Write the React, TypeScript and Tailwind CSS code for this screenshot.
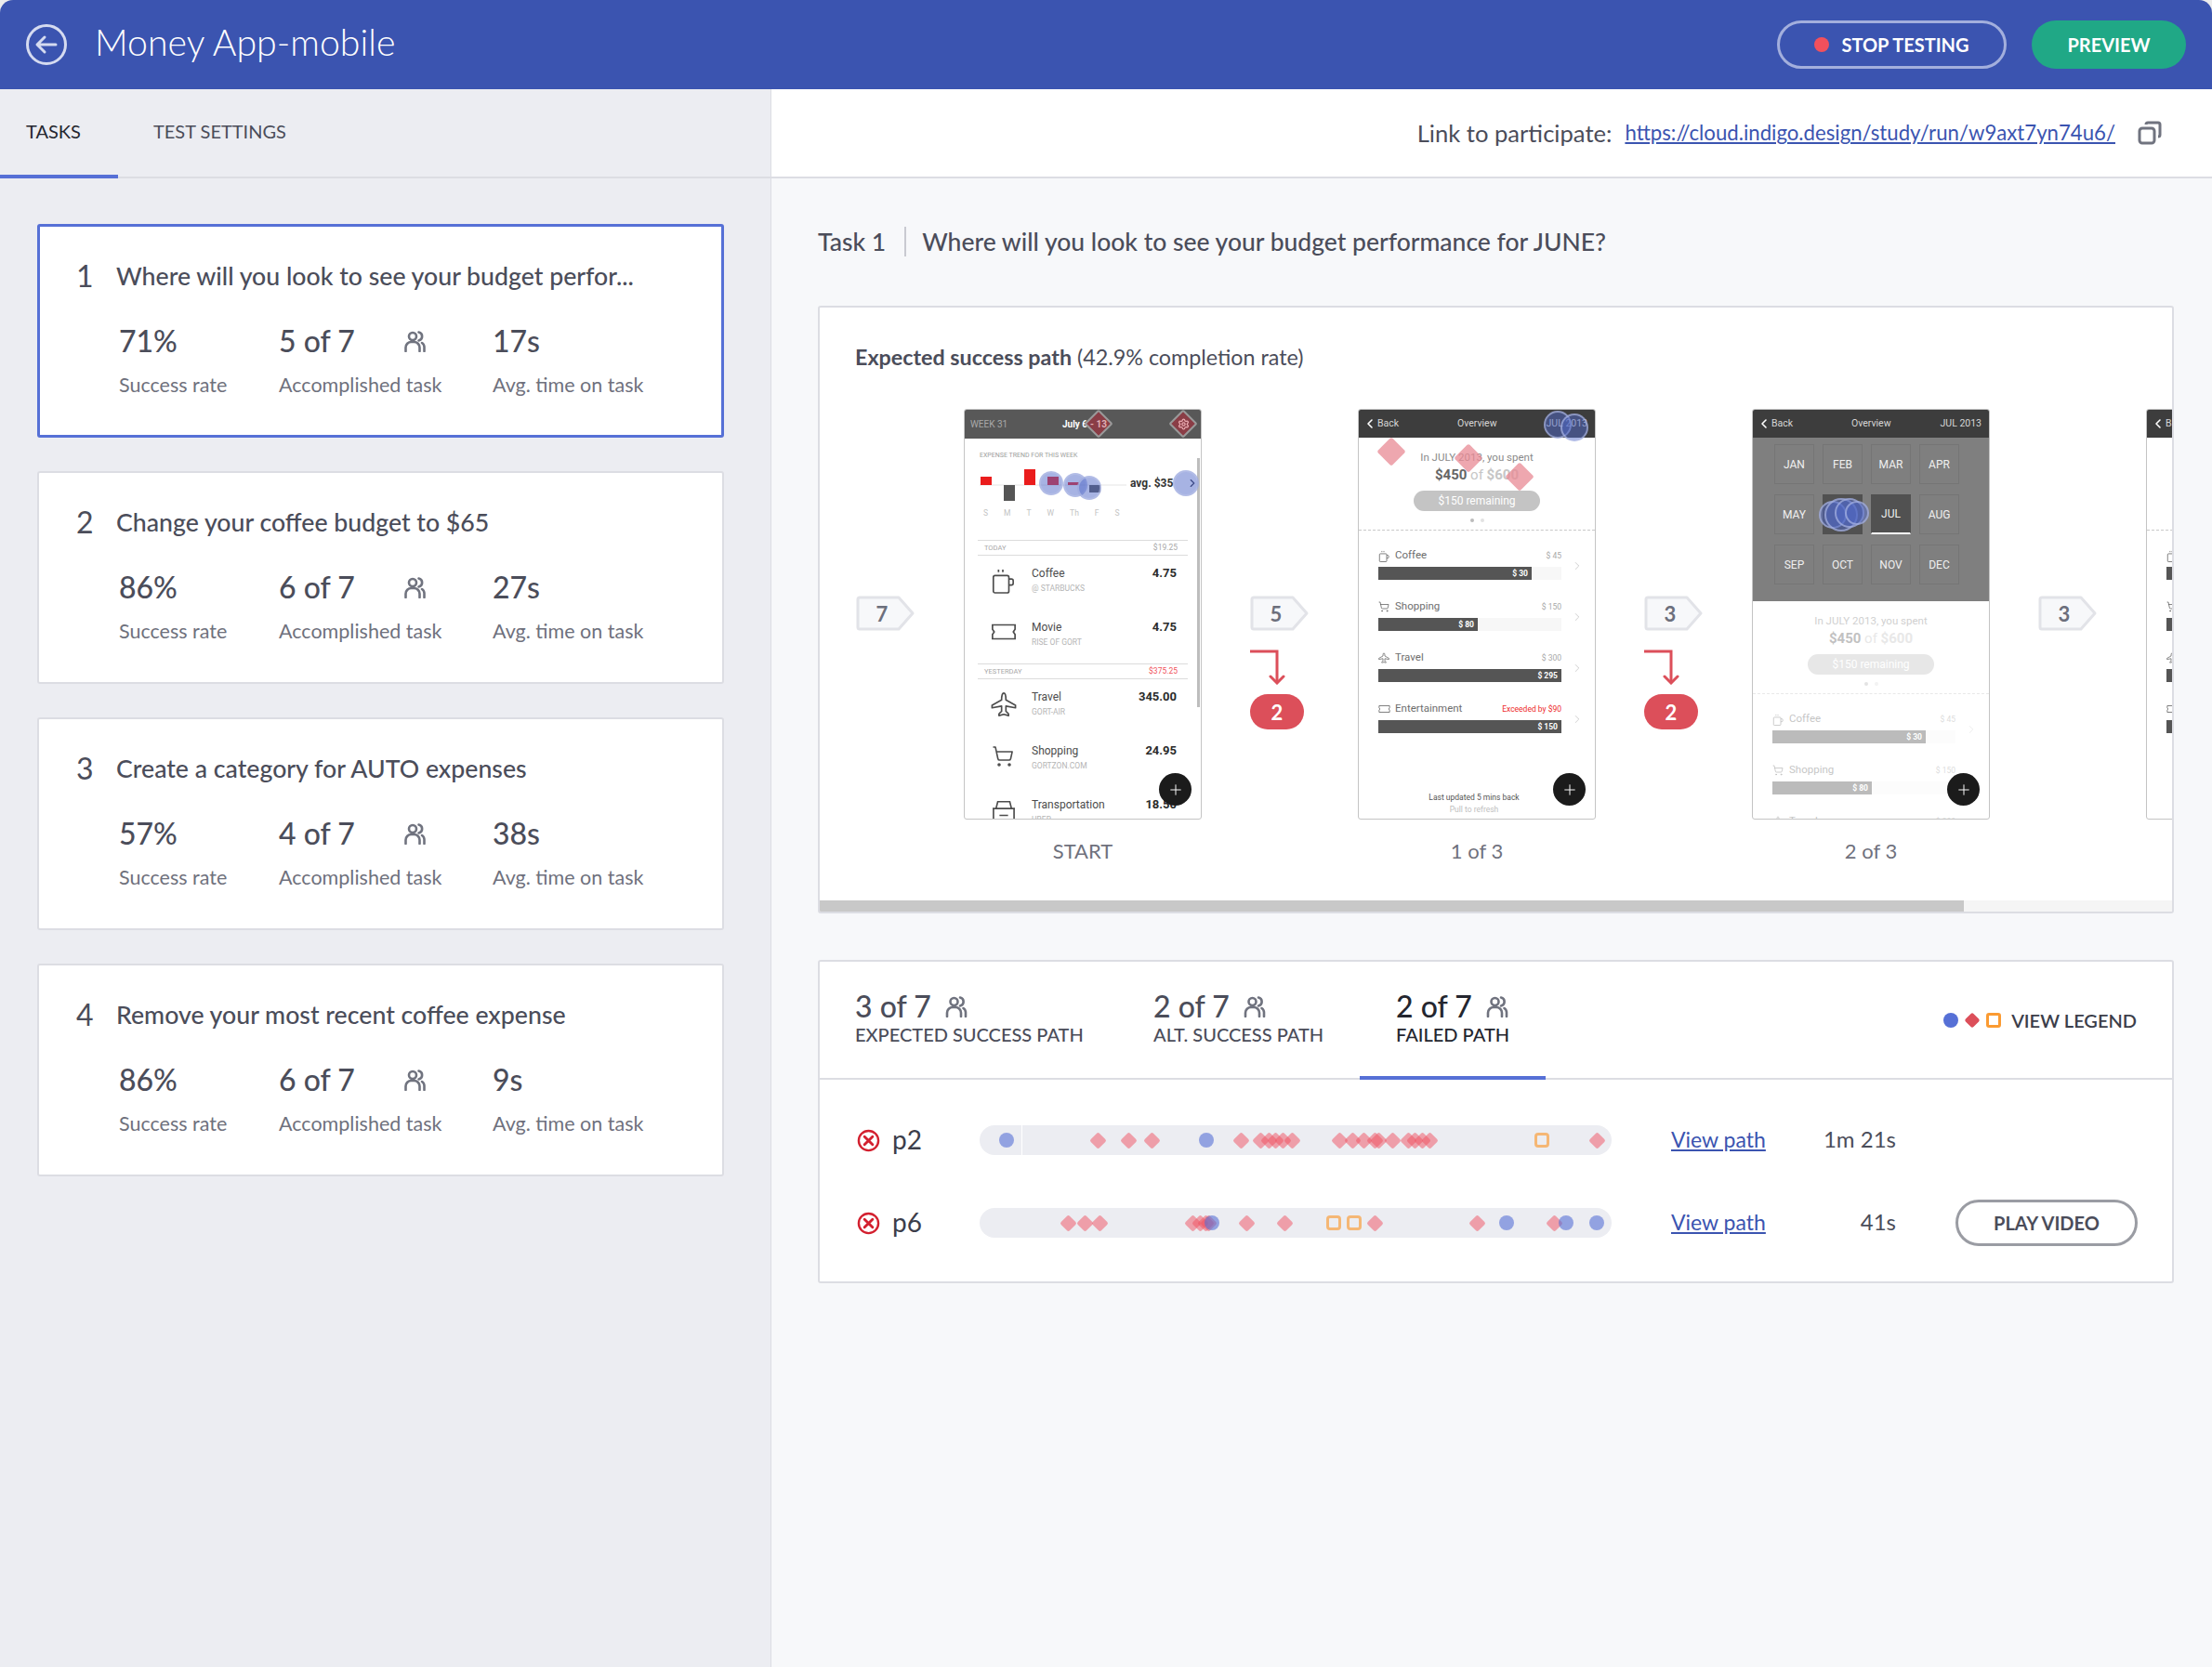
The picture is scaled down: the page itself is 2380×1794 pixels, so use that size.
import React from 'react';
import { ChevronLeft, ChevronRight, Plus, Settings, ShoppingCart } from 'lucide-react';

const tasks = [
    { n: 1, title: 'Where will you look to see your budget perfor...', rate: '71%', done: '5 of 7', time: '17s', active: true },
    { n: 2, title: 'Change your coffee budget to $65', rate: '86%', done: '6 of 7', time: '27s' },
    { n: 3, title: 'Create a category for AUTO expenses', rate: '57%', done: '4 of 7', time: '38s' },
    { n: 4, title: 'Remove your most recent coffee expense', rate: '86%', done: '6 of 7', time: '9s' },
];

type Mark = [string, number];

const p2Marks: Mark[] = [
    ['c', 29], ['d', 127], ['d', 160], ['d', 185], ['c', 244], ['d', 281], ['d', 302], ['d', 311], ['d', 318], ['d', 326], ['d', 336],
    ['d', 387], ['d', 401], ['d', 413], ['d', 425], ['d', 429], ['d', 444], ['d', 461], ['d', 468], ['d', 476], ['d', 484], ['s', 605], ['d', 664],
];

const p6Marks: Mark[] = [
    ['d', 95], ['d', 113], ['d', 129], ['d', 229], ['d', 237], ['d', 243], ['d', 246], ['c', 250], ['d', 287], ['d', 328],
    ['s', 381], ['s', 403], ['d', 425], ['d', 535], ['c', 567], ['d', 618], ['c', 631], ['c', 664],
];

const PeopleIcon = ({ className }: { className: string }) => (
    <svg viewBox="0 0 24 24" fill="none" stroke="currentColor" strokeWidth="2.6" strokeLinecap="round" className={className}>
        <circle cx="10" cy="7" r="4" />
        <path d="M2.5 23v-4a6 6 0 0 1 6-6h3a6 6 0 0 1 6 6v4" />
        <path d="M16.5 2.5a4.6 4.6 0 0 1 0 9" />
        <path d="M20 14a5.5 5.5 0 0 1 2.5 5v4" />
    </svg>
);

const FailIcon = () => (
    <svg viewBox="0 0 26 26" className="w-[25px] h-[25px]" fill="none" stroke="#d3202f">
        <circle cx="13" cy="13" r="11" strokeWidth="2.5" />
        <path d="M8.5 8.5l9 9M17.5 8.5l-9 9" strokeWidth="3" strokeLinecap="round" />
    </svg>
);

const Marker = ({ kind, left }: { kind: string; left: number }) => {
    const style = { left };
    if (kind === 'c') {
        return <span style={style} className="absolute top-2 -ml-2 w-4 h-4 rounded-full bg-[#5670d6]/60" />;
    }
    if (kind === 's') {
        return <span style={style} className="absolute top-2 -ml-2 w-4 h-4 rounded-[4px] border-[3px] border-[#f9a040]/70" />;
    }
    return <span style={style} className="absolute top-[9.500px] -ml-[6.500px] w-[13px] h-[13px] rotate-45 rounded-[2px] bg-[#f0505f]/50" />;
};

const TaskCard = ({ task }: { task: (typeof tasks)[number] }) => (
    <div
        className={`bg-white rounded-[3px] ${
            task.active ? 'h-[230px] pl-[39px] border-[3px] border-[#5670d6]' : 'h-[229px] pl-10 border-2 border-[#dcdde3]'
        }`}
    >
        <div className="flex items-center pt-[35px] text-[#4b4d5a]">
            <span className="w-[43px] text-[32px] leading-9">{task.n}</span>
            <span className="text-[26.700px] leading-9 font-medium">{task.title}</span>
        </div>
        <div className="flex pl-[46px] pt-[32px]">
            <div className="w-[172px]">
                <div className="text-[32px] leading-10 font-medium text-[#4b4d5a]">{task.rate}</div>
                <div className="mt-[13px] text-[21.500px] leading-7 text-[#6f717d]">Success rate</div>
            </div>
            <div className="w-[230px]">
                <div className="flex items-center text-[32px] leading-10 font-medium text-[#4b4d5a]">
                    {task.done}
                    <PeopleIcon className="w-[24px] h-[24px] ml-[52px] text-[#70737f]" />
                </div>
                <div className="mt-[13px] text-[21.500px] leading-7 text-[#6f717d]">Accomplished task</div>
            </div>
            <div>
                <div className="text-[32px] leading-10 font-medium text-[#4b4d5a]">{task.time}</div>
                <div className="mt-[13px] text-[21.500px] leading-7 text-[#6f717d]">Avg. time on task</div>
            </div>
        </div>
    </div>
);

const Badge = ({ value, failed }: { value: number; failed?: boolean }) => (
    <div className="w-16 shrink-0 pt-[201px]">
        <div className="relative w-16 h-[38px] pr-[8px] flex items-center justify-center text-[22px] font-bold text-[#6c6f7c]">
            <svg viewBox="0 0 64 38" className="absolute inset-0 w-16 h-[38px]">
                <path d="M4 2h42l15 17-15 17H4a2 2 0 0 1-2-2V4a2 2 0 0 1 2-2z" fill="#f7f8fa" stroke="#e2e3e8" strokeWidth="3" strokeLinejoin="round" />
            </svg>
            <span className="relative">{value}</span>
        </div>
        {failed && (
            <>
                <svg viewBox="0 0 38 38" className="mt-[20px] w-[38px] h-[38px]" fill="none" stroke="#dc4f5a" strokeWidth="3">
                    <path d="M0 2h29v34" />
                    <path d="M22 29l7 7 7-7" strokeLinecap="round" />
                </svg>
                <div className="mt-[10px] w-[58px] h-[38px] rounded-full bg-[#dc4f5a] flex items-center justify-center text-white text-[22px] font-bold">
                    2
                </div>
            </>
        )}
    </div>
);

const Fab = () => (
    <div className="absolute left-[209px] top-[391px] w-[35px] h-[35px] rounded-full bg-[#1b1b1b] flex items-center justify-center text-white">
        <Plus className="w-[18px] h-[18px]" strokeWidth={1.3} />
    </div>
);

const Blue = ({ x, y, size = 26 }: { x: number; y: number; size?: number }) => (
    <span
        style={{ left: x - size / 2, top: y - size / 2, width: size, height: size }}
        className="absolute rounded-full bg-[#4f68c8]/50 border-2 border-[#b9c3e8]/60"
    />
);

const MugIcon = ({ className }: { className: string }) => (
    <svg viewBox="0 0 28 30" fill="none" stroke="currentColor" strokeWidth="1.8" className={className}>
        <rect x="3" y="9" width="18" height="20" rx="2" />
        <path d="M21 13h3a2 2 0 0 1 2 2v3a2 2 0 0 1-2 2h-3" />
        <path d="M9 2v3M14 2v3" />
    </svg>
);

const TicketIcon = ({ className }: { className: string }) => (
    <svg viewBox="0 0 30 22" fill="none" stroke="currentColor" strokeWidth="1.8" className={className}>
        <path d="M2 3h26v5l-2 3 2 3v5H2v-5l2-3-2-3z" />
    </svg>
);

const PlaneIcon = ({ className }: { className: string }) => (
    <svg viewBox="0 0 30 30" fill="none" stroke="currentColor" strokeWidth="1.8" strokeLinejoin="round" className={className}>
        <path d="M15 2c2 0 2.5 4 2.5 8l11 6v3l-11-2v6l3 3v2l-5.500-1.500L9.500 28v-2l3-3v-6l-11 2v-3l11-6c0-4 .5-8 2.500-8z" />
    </svg>
);

const CarIcon = ({ className }: { className: string }) => (
    <svg viewBox="0 0 30 26" fill="none" stroke="currentColor" strokeWidth="1.8" className={className}>
        <path d="M2 11h26M6 11l2-8h14l2 8M3 11v13h24V11" />
        <path d="M10 19h10" />
    </svg>
);

const SectionHead = ({ left, right, red }: { left: string; right: string; red?: boolean }) => (
    <div className="mx-[14px] h-[17px] border-y border-[#dcdcdc] flex items-center justify-between px-[7px] text-[7.500px] text-[#a8a8a8]">
        <span>{left}</span>
        <span className={`text-[8.500px] pr-[4px] ${red ? 'text-[#f0525a]' : ''}`}>{right}</span>
    </div>
);

const Expense = ({ icon, name, sub, value }: { icon: React.ReactNode; name: string; sub: string; value: string }) => (
    <div className="h-[58px] flex pl-[28px] pr-[26px] pt-[12px] text-[#4c4c4c]">
        <div className="w-[44px] pt-[1px]">{icon}</div>
        <div className="flex-1">
            <div className="text-[12px] leading-[14px]">{name}</div>
            <div className="mt-[3px] text-[8.500px] leading-[12px] text-[#b5b5b5]">{sub}</div>
        </div>
        <div className="text-[13px] leading-[14px] font-bold text-[#2b2b2b]">{value}</div>
    </div>
);

const StartPhone = () => (
    <div className="relative w-64 h-[442px] overflow-hidden bg-white border border-[#c4c4c4] rounded-[3px] font-['Roboto',sans-serif]">
        <div className="h-[31px] bg-[#585858] flex items-center pl-[6px] text-[10px] text-[#a9a9a9]">
            <span className="w-[99px]">WEEK 31</span>
            <span className="font-bold text-white">July 6</span>
        </div>
        <div className="pl-4 pt-[13px] text-[7px] leading-[10px] text-[#9d9d9d]">EXPENSE TREND FOR THIS WEEK</div>
        <div className="flex mt-[6px] pl-[16px]">
            <svg viewBox="0 0 160 40" className="w-[160px] h-10">
                <path d="M0 21h158" stroke="#e5e5e5" />
                <rect x="1" y="12" width="12" height="9" fill="#ea1c1c" />
                <rect x="26" y="21" width="12" height="17" fill="#555" />
                <rect x="48" y="4" width="12" height="17" fill="#ea1c1c" />
                <rect x="73" y="12" width="12" height="9" fill="#ea1c1c" />
                <rect x="95" y="18" width="12" height="3" fill="#ea1c1c" />
                <rect x="118" y="21" width="12" height="8" fill="#555" />
            </svg>
            <span className="ml-[2px] mt-[12px] text-[12px] leading-[14px] font-bold text-[#333]">avg. $35</span>
        </div>
        <div className="flex gap-[17px] pl-[20px] mt-[5px] text-[8.500px] leading-[12px] text-[#c4c4c4]">
            <span>S</span>
            <span>M</span>
            <span>T</span>
            <span>W</span>
            <span>Th</span>
            <span>F</span>
            <span>S</span>
        </div>
        <div className="mt-[23px]">
            <SectionHead left="TODAY" right="$19.25" />
            <Expense icon={<MugIcon className="w-[26px] h-[28px]" />} name="Coffee" sub="@ STARBUCKS" value="4.75" />
            <Expense icon={<TicketIcon className="w-[28px] h-[22px]" />} name="Movie" sub="RISE OF GORT" value="4.75" />
            <SectionHead left="YESTERDAY" right="$375.25" red />
            <Expense icon={<PlaneIcon className="w-[28px] h-[28px]" />} name="Travel" sub="GORT-AIR" value="345.00" />
            <Expense icon={<ShoppingCart className="w-[26px] h-[24px]" strokeWidth={1.6} />} name="Shopping" sub="GORTZON.COM" value="24.95" />
            <Expense icon={<CarIcon className="w-[28px] h-[24px]" />} name="Transportation" sub="UBER" value="18.50" />
        </div>
        <div className="absolute left-[250px] top-[52px] w-[3px] h-[268px] bg-[#bdbdbd]" />
        <span className="absolute left-[133px] top-[4px] w-[22px] h-[22px] rotate-45 rounded-[2px] bg-[#8a3d46] border-2 border-[#9a9a9a]" />
        <span className="absolute left-[135px] top-[8px] text-[10px] font-bold text-[#e0b0b4]">- 13</span>
        <span className="absolute left-[224px] top-[4px] w-[22px] h-[22px] rotate-45 rounded-[2px] bg-[#8a3d46] border-2 border-[#9a9a9a]" />
        <Settings className="absolute left-[229px] top-[9px] w-[13px] h-[13px] text-[#e8a8ae]" strokeWidth={2.5} />
        <Blue x={93} y={79} />
        <Blue x={119} y={81} />
        <Blue x={134} y={84} />
        <Blue x={238} y={79} size={28} />
        <ChevronRight className="absolute left-[238px] top-[72px] w-[14px] h-[14px] text-[#3c4a86]" />
        <Fab />
    </div>
);

const budgets = [
    { icon: <MugIcon className="w-[12px] h-[13px]" />, name: 'Coffee', cap: '$ 45', spent: '$ 30', fill: 'w-[165px]' },
    { icon: <ShoppingCart className="w-[12px] h-[12px]" strokeWidth={1.5} />, name: 'Shopping', cap: '$ 150', spent: '$ 80', fill: 'w-[107px]' },
    { icon: <PlaneIcon className="w-[12px] h-[12px]" />, name: 'Travel', cap: '$ 300', spent: '$ 295', fill: 'w-[197px]' },
    { icon: <TicketIcon className="w-[13px] h-[10px]" />, name: 'Entertainment', cap: 'Exceeded by $90', spent: '$ 150', fill: 'w-[197px]', over: true },
];

const OverviewHeader = () => (
    <div className="h-[30px] bg-[#3d3d3d] flex items-center pl-[4px] pr-[8px] text-[10.500px] text-[#d6d6d6]">
        <ChevronLeft className="w-[16px] h-[18px] text-white" strokeWidth={2.4} />
        <span className="w-[86px]">Back</span>
        <span className="w-[70px]">Overview</span>
        <span className="ml-auto">JUL 2013</span>
    </div>
);

const OverviewBody = ({ dim }: { dim?: boolean }) => (
    <div className={dim ? 'opacity-40' : ''}>
        <div className="h-[100px] border-b border-dashed border-[#c8c8c8] flex flex-col items-center pt-[13px] text-[#8a8a8a]">
            <div className="text-[11.500px] leading-[16px]">In JULY 2013, you spent</div>
            <div className="mt-[2px] text-[15px] leading-[18px] font-bold text-[#c6c6c6]">
                <span className="text-[#666]">$450</span> <span className="font-normal">of</span> $600
            </div>
            <div className="mt-[8px] w-[136px] h-[22px] rounded-full bg-[#c4c4c4] flex items-center justify-center text-[12px] text-white">
                $150 remaining
            </div>
            <div className="mt-[8px] flex gap-[7px]">
                <span className="w-[4px] h-[4px] rounded-full bg-[#bbb]" />
                <span className="w-[4px] h-[4px] rounded-full bg-[#e2e2e2]" />
            </div>
        </div>
        <div className="pt-[19px] pl-[21px]">
            {budgets.map((b) => (
                <div key={b.name} className="h-[55px] flex">
                    <div className="w-[197px]">
                        <div className="h-[16px] flex items-center text-[11.500px] text-[#6e6e6e]">
                            <span className="w-[18px] flex text-[#5c5c5c]">{b.icon}</span>
                            {b.name}
                            <span className={`ml-auto text-[8.500px] ${b.over ? 'text-[#ee2a2a]' : 'text-[#a8a8a8]'}`}>{b.cap}</span>
                        </div>
                        <div className="mt-[4px] h-[14px] bg-[#f7f7f7]">
                            <div className={`${b.fill} h-[14px] bg-[#555] flex items-center justify-end pr-[4px] text-[8.500px] font-bold text-white`}>
                                {b.spent}
                            </div>
                        </div>
                    </div>
                    <ChevronRight className="ml-[10px] mt-[11px] w-[14px] h-[16px] text-[#b0b0b0]" strokeWidth={1} />
                </div>
            ))}
        </div>
    </div>
);

const OverviewPhone = ({ heat }: { heat?: boolean }) => (
    <div className="relative w-64 h-[442px] overflow-hidden bg-white border border-[#c4c4c4] rounded-[3px] font-['Roboto',sans-serif]">
        <OverviewHeader />
        <OverviewBody />
        <div className="mt-[42px] flex flex-col items-center pr-[6px] text-[8.500px] leading-[13px]">
            <span className="text-[#555]">Last updated 5 mins back</span>
            <span className="text-[#c0c0c0]">Pull to refresh</span>
        </div>
        {heat && (
            <>
                <span className="absolute left-[24px] top-[34px] w-[22px] h-[22px] rotate-45 rounded-[2px] bg-[#e88a94]/75" />
                <span className="absolute left-[107px] top-[41px] w-[22px] h-[22px] rotate-45 rounded-[2px] bg-[#e88a94]/75" />
                <span className="absolute left-[162px] top-[61px] w-[22px] h-[22px] rotate-45 rounded-[2px] bg-[#e88a94]/75" />
                <Blue x={214} y={16} size={30} />
                <Blue x={232} y={19} size={30} />
            </>
        )}
        <Fab />
    </div>
);

const months = ['JAN', 'FEB', 'MAR', 'APR', 'MAY', 'JUN', 'JUL', 'AUG', 'SEP', 'OCT', 'NOV', 'DEC'];

const MonthPhone = () => (
    <div className="relative w-64 h-[442px] overflow-hidden bg-white border border-[#c4c4c4] rounded-[3px] font-['Roboto',sans-serif]">
        <OverviewHeader />
        <div className="h-[176px] bg-[#7f7f7f] pl-[23px] pt-[7px] grid grid-cols-[repeat(4,43px)] auto-rows-[43px] gap-x-[9px] gap-y-[11px]">
            {months.map((m) => (
                <div
                    key={m}
                    className={`flex items-center justify-center text-[12px] text-[#f0f0f0] border ${
                        m === 'JUL'
                            ? 'bg-[#515151] border-[#515151] border-b-2 border-b-white'
                            : m === 'JUN'
                              ? 'bg-[#515151] border-[#515151]'
                              : 'border-[#757575]'
                    }`}
                >
                    {m === 'JUN' ? '' : m}
                </div>
            ))}
        </div>
        <OverviewBody dim />
        <Blue x={86} y={113} size={30} />
        <Blue x={95} y={113} size={36} />
        <Blue x={104} y={111} size={32} />
        <Blue x={112} y={111} size={26} />
        <Fab />
    </div>
);

const PhoneCol = ({ label, children }: { label: string; children: React.ReactNode }) => (
    <div className="w-64 shrink-0 flex flex-col items-center">
        {children}
        <div className="mt-[20px] text-[22px] leading-7 text-[#6f717d]">{label}</div>
    </div>
);

const PathTab = ({ count, label, className, dark }: { count: string; label: string; className: string; dark?: boolean }) => (
    <div className={`${className} pt-[30px] ${dark ? 'text-[#24262f]' : 'text-[#4b4d5a]'}`}>
        <div className="flex items-center text-[32px] leading-9 font-medium">
            {count}
            <PeopleIcon className="w-[25px] h-[24px] ml-[14px] text-[#70737f]" />
        </div>
        <div className="text-[20px] leading-6 font-medium whitespace-nowrap">{label}</div>
    </div>
);

const PathRow = ({ name, marks, time, video, line }: { name: string; marks: Mark[]; time: string; video?: boolean; line?: boolean }) => (
    <div className="h-[50px] flex items-center pl-10">
        <div className="w-[132px] flex items-center">
            <FailIcon />
            <span className="ml-[13px] -mt-[2px] text-[28px] leading-8 text-[#3c3e4a]">{name}</span>
        </div>
        <div className="relative w-[680px] h-8 rounded-full bg-[#ecedf2]">
            {line && <span className="absolute left-[45px] top-0 w-px h-8 bg-white" />}
            {marks.map(([kind, left], i) => (
                <Marker key={i} kind={kind} left={left} />
            ))}
        </div>
        <a className="ml-[64px] -mt-[2px] w-[102px] whitespace-nowrap text-[23px] leading-8 text-[#3b54b0] underline">View path</a>
        <span className="w-[140px] -mt-[2px] text-right text-[24px] leading-8 text-[#4b4d5a]">{time}</span>
        {video && (
            <button className="ml-[64px] w-[196px] h-[50px] rounded-full border-[3px] border-[#9a9ca3] text-[20px] font-bold text-[#4b4d5a]">
                PLAY VIDEO
            </button>
        )}
    </div>
);

export default function App() {
    return (
        <div className="w-[2380px] h-[1794px] flex flex-col overflow-hidden bg-[#ececec] font-['Lato',sans-serif]">
            <header className="h-24 shrink-0 bg-[#3b54b0] rounded-t-[14px] flex items-center pl-7 pr-7 text-white">
                <svg viewBox="0 0 44 44" className="w-11 h-11" fill="none" stroke="#d5dbf0" strokeWidth="3">
                    <circle cx="22" cy="22" r="20.500" />
                    <path d="M32 22H13M20 14l-8 8 8 8" strokeWidth="3" strokeLinecap="round" strokeLinejoin="round" />
                </svg>
                <span className="ml-[30px] -mt-[5px] text-[39.300px] font-light">Money App-mobile</span>
                <button className="ml-auto w-[247px] h-[52px] rounded-full border-[3px] border-[#a3afdd] flex items-center justify-center gap-[13px] text-[20px] font-bold">
                    <span className="w-4 h-4 rounded-full bg-[#f2505c]" />
                    STOP TESTING
                </button>
                <button className="ml-[27px] w-[166px] h-[52px] rounded-full bg-[#20a886] text-[20px] font-bold">PREVIEW</button>
            </header>

            <div className="flex flex-1 min-h-0">
                <aside className="w-[830px] shrink-0 bg-[#ecedf2] border-r border-[#dcdde3]">
                    <div className="h-24 border-b-2 border-[#dcdde3] flex text-[20px]">
                        <div className="w-[127px] -mb-[2px] pl-7 pt-[30px] text-[#24262f] border-b-4 border-[#5670d6]">TASKS</div>
                        <div className="ml-[38px] pt-[30px] text-[#4b4d5a]">TEST SETTINGS</div>
                    </div>
                    <div className="pl-10 pr-[50px] pt-[49px] flex flex-col gap-9">
                        {tasks.map((task) => (
                            <TaskCard key={task.n} task={task} />
                        ))}
                    </div>
                </aside>

                <main className="flex-1 min-w-0 bg-[#f7f8fa]">
                    <div className="h-24 bg-white border-b-2 border-[#dcdde3] flex items-center justify-end pr-[54px] text-[25.600px] text-[#4b4d5a]">
                        <span>Link to participate:</span>
                        <a className="ml-[14px] text-[22.200px] text-[#3b54b0] underline">https://cloud.indigo.design/study/run/w9axt7yn74u6/</a>
                        <svg viewBox="0 0 26 26" className="ml-6 w-[26px] h-[26px]" fill="none" stroke="#70737f" strokeWidth="3">
                            <rect x="2" y="8" width="16" height="16" rx="3" />
                            <path d="M9 4a2 2 0 0 1 2-2h11a2 2 0 0 1 2 2v11a2 2 0 0 1-2 2" />
                        </svg>
                    </div>

                    <div className="pl-[50px] pr-[41px]">
                        <div className="pt-[52px] flex items-center text-[26.500px] leading-8 font-medium text-[#4b4d5a]">
                            <span>Task 1</span>
                            <span className="ml-5 mr-[17px] w-[2px] h-8 bg-[#c9cad1]" />
                            <span>Where will you look to see your budget performance for JUNE?</span>
                        </div>

                        <section className="mt-[53px] h-[654px] bg-white border-2 border-[#dcdde3] rounded-[3px] flex flex-col overflow-hidden">
                            <div className="pt-[38px] pl-[38px] text-[23.300px] leading-[30px] text-[#4b4d5a]">
                                <b>Expected success path</b> (42.9% completion rate)
                            </div>
                            <div className="flex-1 min-h-0 flex gap-[52px] pt-[41px] pl-[39px] overflow-hidden">
                                <Badge value={7} />
                                <PhoneCol label="START">
                                    <StartPhone />
                                </PhoneCol>
                                <Badge value={5} failed />
                                <PhoneCol label="1 of 3">
                                    <OverviewPhone heat />
                                </PhoneCol>
                                <Badge value={3} failed />
                                <PhoneCol label="2 of 3">
                                    <MonthPhone />
                                </PhoneCol>
                                <Badge value={3} />
                                <PhoneCol label="3 of 3">
                                    <OverviewPhone />
                                </PhoneCol>
                            </div>
                            <div className="h-3 shrink-0 bg-[#f5f5f5]">
                                <div className="w-[1231px] h-3 bg-[#c8c8c8]" />
                            </div>
                        </section>

                        <section className="mt-[50px] h-[348px] bg-white border-2 border-[#dcdde3] rounded-[3px]">
                            <div className="h-[127px] border-b-2 border-[#dcdde3] flex pl-[38px] pr-[38px]">
                                <PathTab count="3 of 7" label="EXPECTED SUCCESS PATH" className="w-[321px]" />
                                <PathTab count="2 of 7" label="ALT. SUCCESS PATH" className="w-[222px]" />
                                <PathTab count="2 of 7" label="FAILED PATH" className="w-[200px] -mb-[2px] pl-[39px] border-b-4 border-[#5670d6]" dark />
                                <div className="ml-auto flex items-center gap-[6px] text-[20px] font-semibold text-[#3c3e4a]">
                                    <span className="w-4 h-4 rounded-full bg-[#5670d6]" />
                                    <span className="mx-[3px] w-3 h-3 rotate-45 rounded-[2px] bg-[#dc4f5a]" />
                                    <span className="w-4 h-4 rounded-[3px] border-[3px] border-[#fb9b32]" />
                                    <span className="ml-[5px]">VIEW LEGEND</span>
                                </div>
                            </div>
                            <div className="pt-[40px] flex flex-col gap-[39px]">
                                <PathRow name="p2" marks={p2Marks} time="1m 21s" line />
                                <PathRow name="p6" marks={p6Marks} time="41s" video />
                            </div>
                        </section>
                    </div>
                </main>
            </div>
        </div>
    );
}
